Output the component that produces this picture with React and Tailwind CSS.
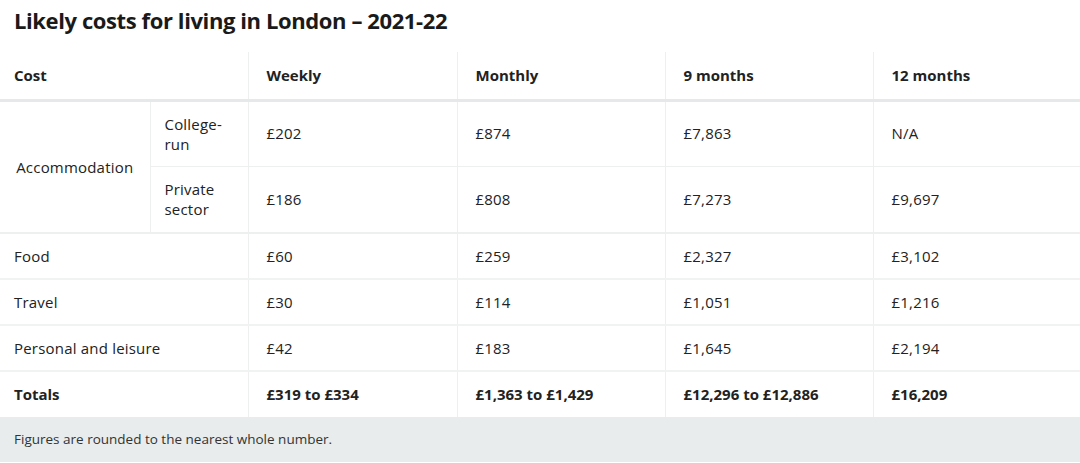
import React from 'react';

const rows = [
  { label: 'Food', w: '£60', m: '£259', n: '£2,327', t: '£3,102' },
  { label: 'Travel', w: '£30', m: '£114', n: '£1,051', t: '£1,216' },
  { label: 'Personal and leisure', w: '£42', m: '£183', n: '£1,645', t: '£2,194' },
];

const cell = "pl-[18px] border-l border-[#eef0f0] text-left align-middle";

const App = () => {
  return (
    <div className="w-[1080px] h-[463px] bg-white text-[#222] overflow-hidden" style={{ fontFamily: '"Open Sans", Arial, sans-serif' }}>
      <h1 className="pl-[14px] pt-[4px] h-[52px] text-[22px] font-bold leading-[32px] tracking-[-0.4px] text-[#1a1a1a]">
        Likely costs for living in London – 2021-22
      </h1>
      <table className="w-full table-fixed border-collapse text-[15px] tracking-[0.2px]">
        <colgroup>
          <col className="w-[150px]" />
          <col className="w-[98px]" />
          <col className="w-[209px]" />
          <col className="w-[208px]" />
          <col className="w-[208px]" />
          <col />
        </colgroup>
        <thead>
          <tr className="h-[48px] border-b-[3px] border-[#e6e9e9] font-bold tracking-normal">
            <th colSpan={2} className="pl-[14px] text-left">Cost</th>
            <th className={cell}>Weekly</th>
            <th className={cell}>Monthly</th>
            <th className={cell}>9 months</th>
            <th className={cell}>12 months</th>
          </tr>
        </thead>
        <tbody>
          <tr className="h-[66px] border-b border-[#eef0f0]">
            <td rowSpan={2} className="text-center align-middle border-b-2 border-[#eef0f0]">Accommodation</td>
            <td className="pl-[14px] border-l border-[#eef0f0] leading-[20px]">College-<br />run</td>
            <td className={cell}>£202</td>
            <td className={cell}>£874</td>
            <td className={cell}>£7,863</td>
            <td className={cell}>N/A</td>
          </tr>
          <tr className="h-[67px] border-b-2 border-[#eef0f0]">
            <td className="pl-[14px] border-l border-[#eef0f0] leading-[20px]">Private<br />sector</td>
            <td className={cell}>£186</td>
            <td className={cell}>£808</td>
            <td className={cell}>£7,273</td>
            <td className={cell}>£9,697</td>
          </tr>
          {rows.map(r => (
            <tr key={r.label} className="h-[46px] border-b-2 border-[#f1f3f3]">
              <td colSpan={2} className="pl-[14px]">{r.label}</td>
              <td className={cell}>{r.w}</td>
              <td className={cell}>{r.m}</td>
              <td className={cell}>{r.n}</td>
              <td className={cell}>{r.t}</td>
            </tr>
          ))}
          <tr className="h-[46px] font-bold tracking-normal">
            <td colSpan={2} className="pl-[14px]">Totals</td>
            <td className={cell}>£319 to £334</td>
            <td className={cell}>£1,363 to £1,429</td>
            <td className={cell}>£12,296 to £12,886</td>
            <td className={cell}>£16,209</td>
          </tr>
        </tbody>
      </table>
      <div className="h-[45px] bg-[#e8ecec] pl-[14px] flex items-center text-[13.5px] text-[#333]">
        Figures are rounded to the nearest whole number.
      </div>
    </div>
  );
};

export default App;
